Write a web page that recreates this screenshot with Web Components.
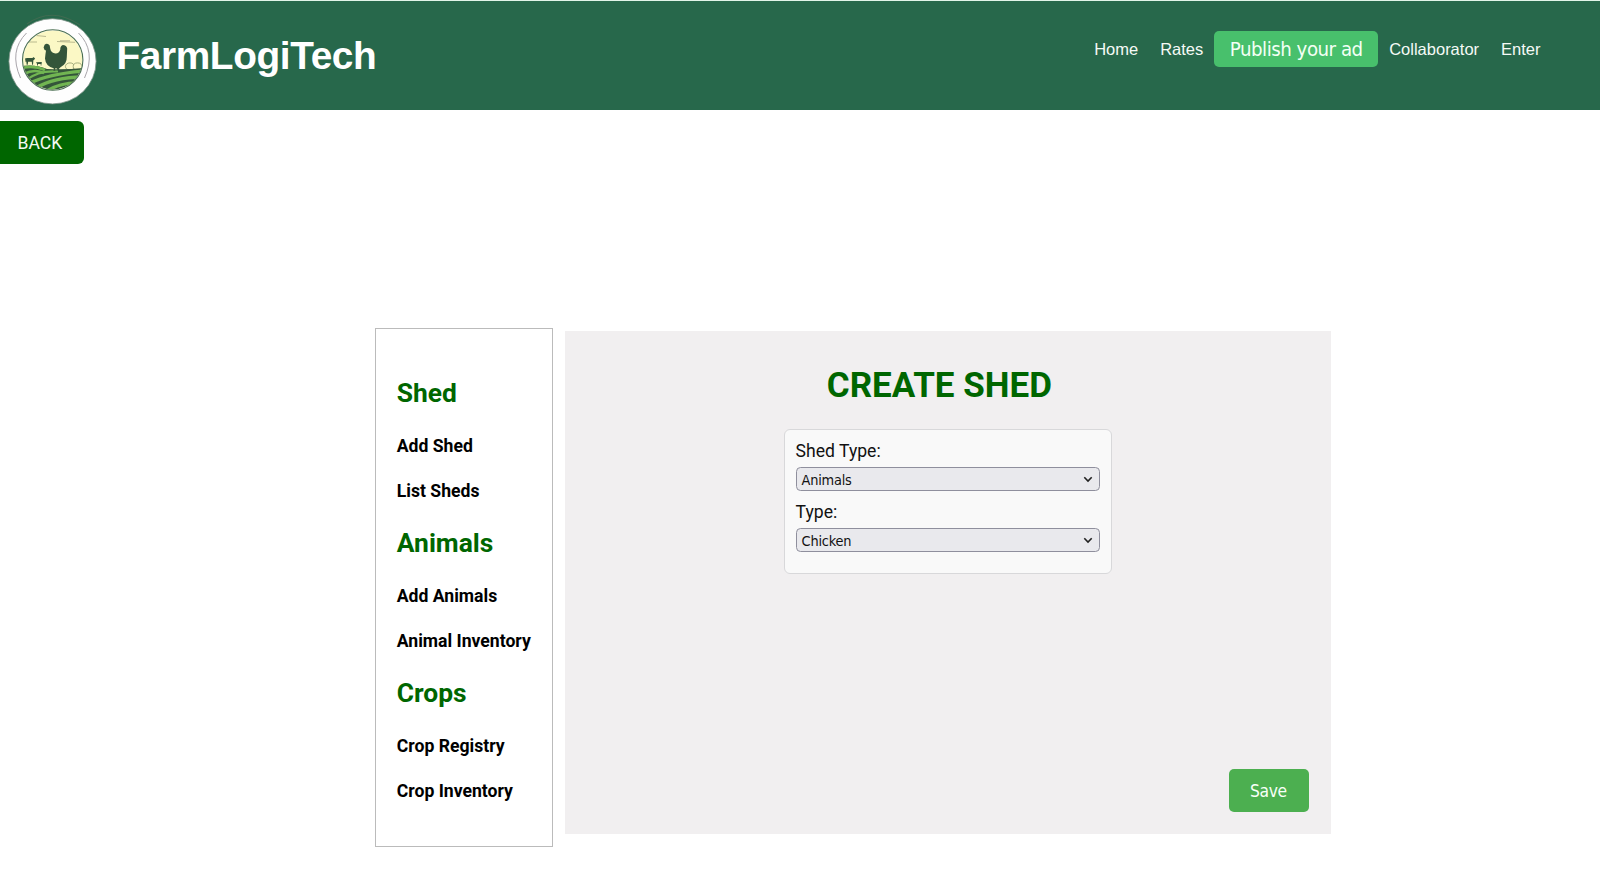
<!DOCTYPE html>
<html lang="en">
<head>
<meta charset="utf-8">
<title>FarmLogiTech</title>
<style>
html,body{margin:0;height:100%;background:#fff}
body{font-family:Roboto,sans-serif;font-size:17.6px;color:#000;overflow:hidden}
</style>
</head>
<body>
<farm-app></farm-app>
<script>
function define(name, html) {
  const t = document.createElement('template');
  t.innerHTML = html;
  customElements.define(name, class extends HTMLElement {
    constructor() {
      super();
      this.attachShadow({ mode: 'open' }).append(t.content.cloneNode(true));
    }
  });
}

define('farm-logo', `
<style>:host{display:block;width:90px;height:94px}svg{display:block}</style>
<svg width="90" height="94" viewBox="8 14 90 94">
  <defs><clipPath id="c"><circle cx="52.7" cy="60" r="29.6"/></clipPath></defs>
  <path d="M27 24Q52 6 80 25" fill="none" stroke="#3f6b51" stroke-width="1.2"/>
  <ellipse cx="52.5" cy="61.3" rx="43.6" ry="42.6" fill="#fefefe" stroke="#7f9489" stroke-width=".8"/>
  <path d="M26.500 33Q8.500 51 20.500 78M78.500 33Q96.500 51 84.500 78" fill="none" stroke="#a9a5ab" stroke-width="1"/>
  <g clip-path="url(#c)">
    <rect x="22" y="29" width="62" height="62" fill="#fbf8c5"/>
    <path d="M31 35l15 1.500M29 42h8M57 41.500l18 .8M60 40.800h10" stroke="#a9a982" stroke-width=".8" fill="none"/>
    <g fill="#fbf8c5" stroke="#8f9a6c" stroke-width=".8"><ellipse cx="70" cy="66.500" rx="4.600" ry="3.600"/><ellipse cx="77.500" cy="66.500" rx="4.300" ry="3.600"/></g>
    <path d="M22 66Q36 64 47 69Q66 70 84 68V92H22z" fill="#34553a"/>
    <g fill="none" stroke="#71b552">
      <path d="M22 68Q34 65 45 70" stroke-width="2.600"/>
      <path d="M24 74Q34 68.500 44 73" stroke-width="2.600"/>
      <path d="M26 80Q39 70 58 71.500" stroke-width="2.200"/>
      <path d="M30 83Q48 74 84 71" stroke-width="3.400"/>
      <path d="M36 88Q54 77 84 77" stroke-width="3.600"/>
      <path d="M45 92Q60 82 82 83" stroke-width="3.400"/>
    </g>
  </g>
  <path d="M25 58.500l2-.6h5.500l.8-1 .8.900 1 .3-.8 1.600-.9.500-.4 4.500h-.9l-.3-2.900h-3.700l-.4 2.900h-1l-.4-3.200-.6.800zM36 62.300l5.400-.2.700.9-.7.800v1.700h-.7V64H38v1.500h-.8l-.2-1.800z" fill="#34553a"/>
  <path d="M43.600 47.500l1-2.700 1.500-1 2 .3 1.600 1.300.5 3Q51 52.600 54.500 53.300Q59 54 60.300 49.500Q60 46 62.800 45Q66.600 45.200 67.200 48.500L66.800 57Q67 64 60.500 67.300L58.700 69l1.300 1.300h-2.300L57 68.500l-1.600-.2-.7 1.500 1 1h-2.700l1-1.100-.4-1.400Q45.500 66 45 58.500Q45.500 53.500 46 50.600L44.600 50z" fill="#34553a"/>
  <circle cx="52.700" cy="60" r="30.200" fill="none" stroke="#4b7052" stroke-width="1.100"/>
</svg>`);

define('nav-link', `
<style>
:host{display:block;font:16.5px/36px "Liberation Sans",sans-serif;color:#f5faf6;white-space:nowrap}
:host([primary]){box-sizing:border-box;width:163.5px;height:36px;border-radius:5px;background:#48c06c;text-align:center;font:20.3px/37px "DejaVu Sans Condensed","Noto Sans",sans-serif;letter-spacing:-.5px;color:#f3fff5}
</style><slot></slot>`);

define('site-header', `
<style>
:host{display:flex;box-sizing:border-box;height:110px;border-top:1px solid #e2f5e9;background:#27684b;padding:13px 59.500px 0 8px;align-items:flex-start}
h1{margin:20px 0 0 18.500px;font:bold 38.800px/44px "Liberation Sans",sans-serif;color:#fff;letter-spacing:-.38px}
nav{display:flex;margin:17.400px 0 0 auto}
nav-link{margin-right:22px}
nav-link:nth-child(2),nav-link[primary]{margin-right:11.200px}
nav-link:last-child{margin-right:0}
</style>
<farm-logo></farm-logo><h1>FarmLogiTech</h1>
<nav><nav-link>Home</nav-link><nav-link>Rates</nav-link><nav-link primary>Publish your ad</nav-link><nav-link>Collaborator</nav-link><nav-link>Enter</nav-link></nav>`);

define('back-button', `
<style>
:host{display:block;margin-top:11.400px;width:84px;height:43.1px}
button{display:block;width:84px;height:43px;border:0;border-radius:0 6px 6px 0;background:#060;color:#f2faf2;font:17.6px/44px Roboto,sans-serif;padding:0 0 0 17.5px;text-align:left}
</style><button><slot></slot></button>`);

define('menu-group', `
<style>
:host{display:block}
h2{margin:0;height:60.6px;font:bold 26.4px/59px Roboto,sans-serif;color:#060}
div{display:flex;flex-direction:column}
::slotted(a){font-weight:bold;line-height:44.700px;color:#000;white-space:nowrap}
</style><h2><slot name="title"></slot></h2><div><slot></slot></div>`);

define('side-menu', `
<style>:host{display:block;box-sizing:border-box;width:178.500px;height:519px;border:1px solid #bbb;padding:34.6px 0 0 21.200px}</style>
<menu-group><span slot="title">Shed</span><a>Add Shed</a><a>List Sheds</a></menu-group>
<menu-group><span slot="title">Animals</span><a>Add Animals</a><a>Animal Inventory</a></menu-group>
<menu-group><span slot="title">Crops</span><a>Crop Registry</a><a>Crop Inventory</a></menu-group>`);

define('select-field', `
<style>
:host{display:block;height:61px}
label{display:block;font:17.6px/22px Roboto,sans-serif;color:#111}
.box{display:flex;box-sizing:border-box;height:24px;margin-top:5px;border:1px solid #8f8f9d;border-radius:4.500px;background:#e9e9ed;align-items:center;justify-content:space-between;padding:2px 6px 0 5px;font:14.4px/21px "DejaVu Sans Condensed","Noto Sans",sans-serif;letter-spacing:-.22px;color:#111}
svg{display:block;margin-top:-1px}
</style>
<label><slot name="label"></slot></label>
<div class="box"><slot></slot><svg width="10" height="7" viewBox="0 0 10 7"><path d="M1.300 1.300L5 5l3.700-3.700" fill="none" stroke="#222" stroke-width="1.600"/></svg></div>`);

define('shed-form', `
<style>
:host{display:flex;flex-direction:column;box-sizing:border-box;width:766px;height:503px;background:#f1eff0;padding:34px 22px 21.500px}
h1{margin:0;padding-right:17.500px;text-align:center;font:bold 35px/42px Roboto,sans-serif;color:#060}
section{box-sizing:border-box;width:328px;height:145px;margin:22.300px auto 0;border:1px solid #d8d8da;border-radius:6px;background:#f9f9f9;padding:10.600px 11px 0 10.500px}
button{margin:auto 0 0 auto;width:80.500px;height:43px;border:0;border-radius:5px;background:#4caf50;color:#f8fff8;font:17.3px/45px "DejaVu Sans Condensed","Noto Sans",sans-serif;letter-spacing:-.4px;padding:0 1px 0 0}
</style>
<h1>CREATE SHED</h1>
<section>
<select-field><span slot="label">Shed Type:</span>Animals</select-field>
<select-field><span slot="label">Type:</span>Chicken</select-field>
</section>
<button>Save</button>`);

define('farm-app', `
<style>
:host{display:block}
main{display:flex;align-items:flex-start;gap:12px;padding:163.500px 0 0 374.600px}
shed-form{margin-top:2.600px}
</style>
<site-header></site-header>
<back-button>BACK</back-button>
<main><side-menu></side-menu><shed-form></shed-form></main>`);
</script>
</body>
</html>
